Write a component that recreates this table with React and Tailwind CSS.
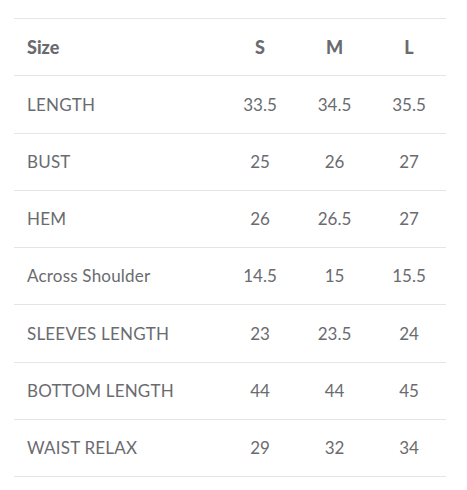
import React from 'react';

const rows = [
  { label: 'LENGTH', s: '33.5', m: '34.5', l: '35.5' },
  { label: 'BUST', s: '25', m: '26', l: '27' },
  { label: 'HEM', s: '26', m: '26.5', l: '27' },
  { label: 'Across Shoulder', s: '14.5', m: '15', l: '15.5' },
  { label: 'SLEEVES LENGTH', s: '23', m: '23.5', l: '24' },
  { label: 'BOTTOM LENGTH', s: '44', m: '44', l: '45' },
  { label: 'WAIST RELAX', s: '29', m: '32', l: '34' },
];

const SizeChart = () => {
  return (
    <div className="bg-white min-h-[490px] pt-[18px] px-[14px]" style={{ fontFamily: "Lato, 'Noto Sans', sans-serif" }}>
      <table className="w-[432px] border-collapse text-[#6a6b6f] text-[17px]">
        <thead>
          <tr className="h-[57.25px] border-y border-[#e5e5e5] text-[18px]">
            <th className="text-left font-black pl-[13px] w-[209px]">Size</th>
            <th className="font-black w-[74px]">S</th>
            <th className="font-black w-[75px]">M</th>
            <th className="font-black w-[74px]">L</th>
          </tr>
        </thead>
        <tbody>
          {rows.map((row) => (
            <tr key={row.label} className="h-[57.25px] border-b border-[#e5e5e5]">
              <td className="text-left pl-[13px] tracking-[0.2px]">{row.label}</td>
              <td className="text-center">{row.s}</td>
              <td className="text-center">{row.m}</td>
              <td className="text-center">{row.l}</td>
            </tr>
          ))}
        </tbody>
      </table>
    </div>
  );
};

export default SizeChart;
